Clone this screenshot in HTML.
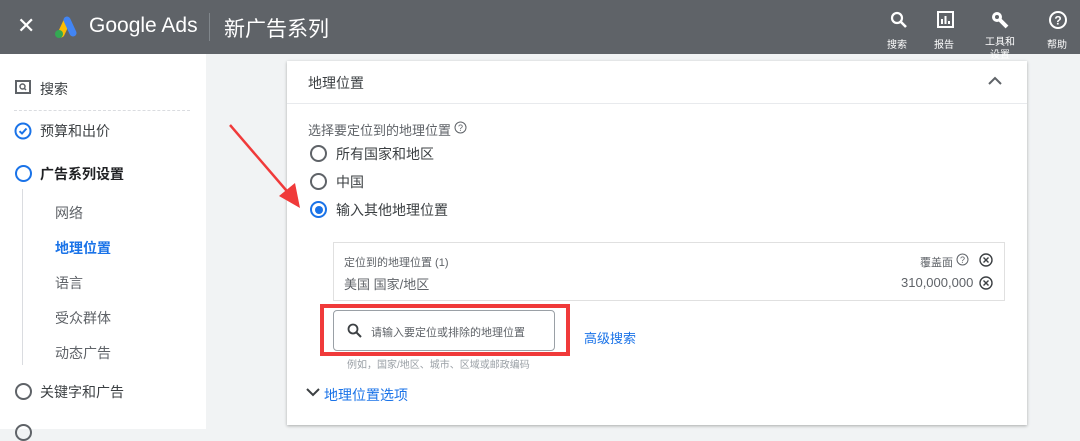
<!DOCTYPE html>
<html><head><meta charset="utf-8"><style>
*{margin:0;padding:0;box-sizing:border-box}
body{width:1080px;height:429px;overflow:hidden;position:relative;background:#f1f3f4;font-family:"Liberation Sans","Noto Sans CJK SC",sans-serif;color:#3c4043}
.a{position:absolute;white-space:nowrap}
.top{position:absolute;left:0;top:0;width:1080px;height:54px;background:#5f6368;color:#fff}
.side{position:absolute;left:0;top:54px;width:206px;height:375px;background:#fff}
.card{position:absolute;left:287px;top:61px;width:740px;height:364px;background:#fff;box-shadow:0 1px 3px rgba(0,0,0,.3)}
.radio{position:absolute;width:17px;height:17px;border:2px solid #5f6368;border-radius:50%}
.ti{font-size:10px;color:#fff;text-align:center}
</style></head><body>
<div class="top">
 <div class="a" style="left:17px;top:13px;font-size:22px">✕</div>
 <svg class="a" style="left:52px;top:14px" width="27" height="25" viewBox="0 0 27 25"><path d="M9 20 L15 7" stroke="#fbbc04" stroke-width="7" stroke-linecap="round"/><path d="M15 6 L21 19" stroke="#4285f4" stroke-width="7" stroke-linecap="round"/><circle cx="7" cy="20" r="4" fill="#34a853"/></svg>
 <div class="a" style="left:89px;top:14px;font-size:21px">Google Ads</div>
 <div class="a" style="left:209px;top:13px;width:1px;height:28px;background:#80868b"></div>
 <div class="a" style="left:224px;top:13px;font-size:21px">新广告系列</div>
 <svg class="a" style="left:890px;top:11px" width="18" height="18" viewBox="0 0 18 18"><circle cx="7" cy="7" r="5" fill="none" stroke="#fff" stroke-width="2.2"/><path d="M11 11 L16 16" stroke="#fff" stroke-width="2.6"/></svg>
 <div class="a ti" style="left:887px;top:36px">搜索</div>
 <svg class="a" style="left:937px;top:11px" width="17" height="17" viewBox="0 0 17 17"><rect x="1" y="1" width="15" height="15" fill="none" stroke="#fff" stroke-width="2"/><path d="M5 13V8M8.5 13V5M12 13V10" stroke="#fff" stroke-width="2"/></svg>
 <div class="a ti" style="left:934px;top:36px">报告</div>
 <svg class="a" style="left:990px;top:10px" width="20" height="20" viewBox="0 0 20 20"><circle cx="7" cy="7" r="5" fill="#fff"/><circle cx="7" cy="7" r="2" fill="#5f6368"/><path d="M9 9 L17 17" stroke="#fff" stroke-width="4"/></svg>
 <div class="a ti" style="left:985px;top:36px;line-height:13px">工具和<br>设置</div>
 <svg class="a" style="left:1048px;top:10px" width="20" height="20" viewBox="0 0 20 20"><circle cx="10" cy="10" r="8" fill="none" stroke="#fff" stroke-width="2"/><text x="10" y="14.5" font-size="12" font-weight="bold" fill="#fff" text-anchor="middle" font-family="Liberation Sans">?</text></svg>
 <div class="a ti" style="left:1047px;top:36px">帮助</div>
</div>
<div class="side">
 <svg class="a" style="left:15px;top:26px" width="16" height="14" viewBox="0 0 16 14"><rect x="1" y="1" width="14" height="12" fill="none" stroke="#5f6368" stroke-width="2"/><circle cx="7.5" cy="6.5" r="2.5" fill="none" stroke="#5f6368" stroke-width="1.5"/><path d="M9.5 8.5L11 10" stroke="#5f6368" stroke-width="1.5"/></svg>
 <div class="a" style="left:40px;top:25px;font-size:14px">搜索</div>
 <div class="a" style="left:14px;top:56px;width:176px;border-top:1px dashed #dadce0"></div>
 <svg class="a" style="left:14px;top:68px" width="18" height="18" viewBox="0 0 18 18"><circle cx="9" cy="9" r="7.5" fill="none" stroke="#1a73e8" stroke-width="2"/><path d="M5.5 9.2 L8 11.5 L12.5 6.5" fill="none" stroke="#1a73e8" stroke-width="2"/></svg>
 <div class="a" style="left:40px;top:67px;font-size:14px">预算和出价</div>
 <div class="a" style="left:15px;top:111px;width:17px;height:17px;border:2px solid #1a73e8;border-radius:50%"></div>
 <div class="a" style="left:40px;top:110px;font-size:14px;font-weight:bold;color:#202124">广告系列设置</div>
 <div class="a" style="left:22px;top:135px;width:1px;height:176px;background:#dadce0"></div>
 <div class="a" style="left:55px;top:149px;font-size:14px;color:#5f6368">网络</div>
 <div class="a" style="left:55px;top:184px;font-size:14px;font-weight:bold;color:#1a73e8">地理位置</div>
 <div class="a" style="left:55px;top:219px;font-size:14px;color:#5f6368">语言</div>
 <div class="a" style="left:55px;top:254px;font-size:14px;color:#5f6368">受众群体</div>
 <div class="a" style="left:55px;top:289px;font-size:14px;color:#5f6368">动态广告</div>
 <div class="a" style="left:15px;top:329px;width:17px;height:17px;border:2px solid #5f6368;border-radius:50%"></div>
 <div class="a" style="left:40px;top:328px;font-size:14px">关键字和广告</div>
 <div class="a" style="left:15px;top:370px;width:17px;height:17px;border:2px solid #5f6368;border-radius:50%"></div>
</div>
<div class="card">
 <div class="a" style="left:21px;top:12px;font-size:14px">地理位置</div>
 <svg class="a" style="left:700px;top:14px" width="16" height="12" viewBox="0 0 16 12"><path d="M2 9 L8 3 L14 9" fill="none" stroke="#5f6368" stroke-width="2"/></svg>
 <div class="a" style="left:0;top:42px;width:740px;height:1px;background:#e8eaed"></div>
 <div class="a" style="left:21px;top:59px;font-size:13px;color:#5f6368">选择要定位到的地理位置</div>
 <svg class="a" style="left:167px;top:60px" width="13" height="13" viewBox="0 0 13 13"><circle cx="6.5" cy="6.5" r="5.5" fill="none" stroke="#5f6368" stroke-width="1"/><text x="6.5" y="10" font-size="9" fill="#5f6368" text-anchor="middle" font-family="Liberation Sans">?</text></svg>
 <div class="radio" style="left:23px;top:84px"></div>
 <div class="a" style="left:49px;top:83px;font-size:14px">所有国家和地区</div>
 <div class="radio" style="left:23px;top:112px"></div>
 <div class="a" style="left:49px;top:111px;font-size:14px">中国</div>
 <div class="radio" style="left:23px;top:140px;border-color:#1a73e8"><div style="position:absolute;left:2.5px;top:2.5px;width:8px;height:8px;border-radius:50%;background:#1a73e8"></div></div>
 <div class="a" style="left:49px;top:139px;font-size:14px">输入其他地理位置</div>
 <div class="a" style="left:46px;top:181px;width:672px;height:59px;border:1px solid #e0e0e0"></div>
 <div class="a" style="left:57px;top:193px;font-size:11px;color:#5f6368">定位到的地理位置 (1)</div>
 <div class="a" style="left:57px;top:213px;font-size:13px;color:#5f6368">美国 国家/地区</div>
 <div class="a" style="left:633px;top:193px;font-size:11px;color:#5f6368">覆盖面</div>
 <svg class="a" style="left:669px;top:192px" width="13" height="13" viewBox="0 0 13 13"><circle cx="6.5" cy="6.5" r="5.5" fill="none" stroke="#5f6368" stroke-width="1"/><text x="6.5" y="10" font-size="9" fill="#5f6368" text-anchor="middle" font-family="Liberation Sans">?</text></svg>
 <div class="a" style="left:614px;top:214px;font-size:13px;color:#5f6368">310,000,000</div>
 <svg class="a" style="left:692px;top:192px" width="14" height="14" viewBox="0 0 14 14"><circle cx="7" cy="7" r="6" fill="none" stroke="#3c4043" stroke-width="1.4"/><path d="M4.5 4.5L9.5 9.5M9.5 4.5L4.5 9.5" stroke="#3c4043" stroke-width="1.4"/></svg>
 <svg class="a" style="left:692px;top:215px" width="14" height="14" viewBox="0 0 14 14"><circle cx="7" cy="7" r="6" fill="none" stroke="#3c4043" stroke-width="1.4"/><path d="M4.5 4.5L9.5 9.5M9.5 4.5L4.5 9.5" stroke="#3c4043" stroke-width="1.4"/></svg>
 <div class="a" style="left:33px;top:243px;width:250px;height:52px;border:4px solid #f03a3a"></div>
 <div class="a" style="left:46px;top:249px;width:222px;height:41px;border:1px solid #9aa0a6;border-radius:4px;background:#fff"></div>
 <svg class="a" style="left:60px;top:262px" width="15" height="15" viewBox="0 0 15 15"><circle cx="6" cy="6" r="4.5" fill="none" stroke="#3c4043" stroke-width="1.8"/><path d="M9.5 9.5L14 14" stroke="#3c4043" stroke-width="2"/></svg>
 <div class="a" style="left:84px;top:263px;font-size:11px;color:#5f6368">请输入要定位或排除的地理位置</div>
 <div class="a" style="left:297px;top:267px;font-size:13px;color:#1a73e8">高级搜索</div>
 <div class="a" style="left:60px;top:295px;font-size:10px;color:#9aa0a6">例如，国家/地区、城市、区域或邮政编码</div>
 <svg class="a" style="left:19px;top:326px" width="14" height="10" viewBox="0 0 14 10"><path d="M1 2 L7 8 L13 2" fill="none" stroke="#3c4043" stroke-width="2"/></svg>
 <div class="a" style="left:37px;top:324px;font-size:14px;color:#1a73e8">地理位置选项</div>
</div>
<svg class="a" style="left:225px;top:120px" width="85" height="95" viewBox="0 0 85 95"><path d="M5 5 L67 77" stroke="#f03a3a" stroke-width="2.5"/><path d="M75 88 L54 76 L70 63 Z" fill="#f03a3a"/></svg>
</body></html>
